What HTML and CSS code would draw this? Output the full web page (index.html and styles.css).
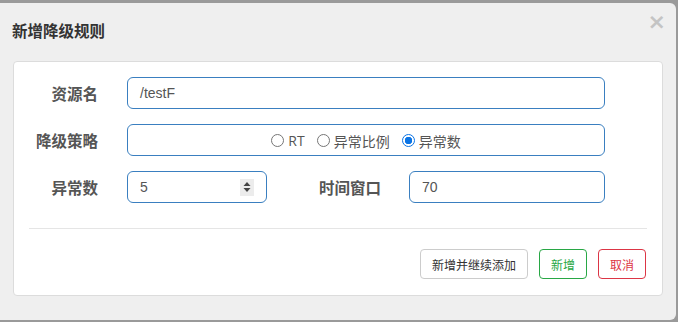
FILE: index.html
```html
<!DOCTYPE html>
<html lang="zh">
<head>
<meta charset="utf-8">
<link rel="stylesheet" href="styles.css">
</head>
<body>
<div class="modal">
  <div class="modal-header">
    <h4 class="title">新增降级规则</h4>
    <span class="close">×</span>
  </div>
  <div class="panel">
    <div class="row">
      <label class="label">资源名</label>
      <div class="input wide">/testF</div>
    </div>
    <div class="row">
      <label class="label">降级策略</label>
      <div class="input wide radios">
        <span class="radio"><span class="circle"></span>RT</span>
        <span class="radio"><span class="circle"></span>异常比例</span>
        <span class="radio"><span class="circle checked"></span>异常数</span>
      </div>
    </div>
    <div class="row">
      <label class="label">异常数</label>
      <div class="input small">5
        <span class="spin"><svg width="8" height="12" viewBox="0 0 8 12"><path d="M4 1 L7.5 5 H0.5 Z" fill="#444"/><path d="M0.5 7 H7.5 L4 11 Z" fill="#444"/></svg></span>
      </div>
      <label class="label label2">时间窗口</label>
      <div class="input medium">70</div>
    </div>
    <div class="divider"></div>
    <div class="buttons">
      <button class="btn btn-default">新增并继续添加</button>
      <button class="btn btn-success">新增</button>
      <button class="btn btn-danger">取消</button>
    </div>
  </div>
</div>
</body>
</html>
```

FILE: styles.css
```css
html, body {
  margin: 0;
  padding: 0;
}
body {
  background: #9a9a9a;
  width: 678px;
  height: 322px;
  overflow: hidden;
  font-family: "Noto Sans CJK SC", "Liberation Sans", sans-serif;
  padding-top: 3px;
  box-sizing: border-box;
}
.modal {
  width: 676px;
  height: 317px;
  background: #efefef;
  border-radius: 0 6px 6px 0;
  box-sizing: border-box;
}
.modal-header {
  position: relative;
  height: 58px;
  padding-left: 12px;
  box-sizing: border-box;
}
.title {
  margin: 0;
  padding-top: 16px;
  font-size: 15.5px;
  line-height: 22px;
  font-weight: bold;
  color: #333;
}
.close {
  position: absolute;
  right: 10px;
  top: 4px;
  font-family: "DejaVu Sans", sans-serif;
  font-size: 22px;
  font-weight: bold;
  color: #c4c4c4;
  line-height: 30px;
}
.panel {
  margin: 0 13px;
  background: #fff;
  border: 1px solid #dcdcdc;
  border-radius: 4px;
  padding: 15px 0 16px 0;
  height: 235px;
  box-sizing: border-box;
}
.row {
  display: flex;
  align-items: center;
  height: 32px;
  margin-bottom: 15px;
}
.label {
  width: 84px;
  text-align: right;
  font-size: 15.5px;
  font-weight: bold;
  color: #555;
  margin-right: 29px;
}
.label2 {
  width: 77px;
  margin-left: 37px;
  margin-right: 28px;
}
.input {
  height: 32px;
  box-sizing: border-box;
  border: 1px solid #3a7fc0;
  border-radius: 6px;
  font-family: "Liberation Sans", "Noto Sans CJK SC", sans-serif;
  font-size: 14px;
  color: #555;
  padding: 0 12px;
  display: flex;
  align-items: center;
}
.wide {
  width: 478px;
}
.small {
  width: 140px;
  justify-content: space-between;
}
.medium {
  width: 196px;
}
.spin {
  width: 14px;
  height: 17px;
  background: #ececec;
  display: flex;
  align-items: center;
  justify-content: center;
}
.radios {
  justify-content: center;
  font-family: "Open Sans", "Noto Sans CJK SC", sans-serif;
  padding-top: 1px;
}
.radio {
  display: flex;
  align-items: center;
  margin: 0 6px;
  color: #555;
}
.circle {
  width: 11px;
  height: 11px;
  border: 1px solid #767676;
  border-radius: 50%;
  margin-right: 4px;
  box-sizing: content-box;
}
.circle.checked {
  border: 1px solid #0b74e5;
  background: radial-gradient(circle, #0b74e5 0, #0b74e5 3.5px, #fff 4px);
}
.divider {
  height: 1px;
  background: #e5e5e5;
  margin: 25px 15px 20px 15px;
}
.buttons {
  display: flex;
  justify-content: flex-end;
  gap: 11px;
  padding-right: 16px;
}
.btn {
  height: 30px;
  box-sizing: border-box;
  background: #fff;
  border: 1px solid #ccc;
  border-radius: 4px;
  font-family: "Noto Sans CJK SC", sans-serif;
  font-size: 12px;
  padding: 0 11px;
  color: #333;
}
.btn-success {
  border-color: #28a745;
  color: #28a745;
}
.btn-danger {
  border-color: #dc3545;
  color: #dc3545;
}
```
